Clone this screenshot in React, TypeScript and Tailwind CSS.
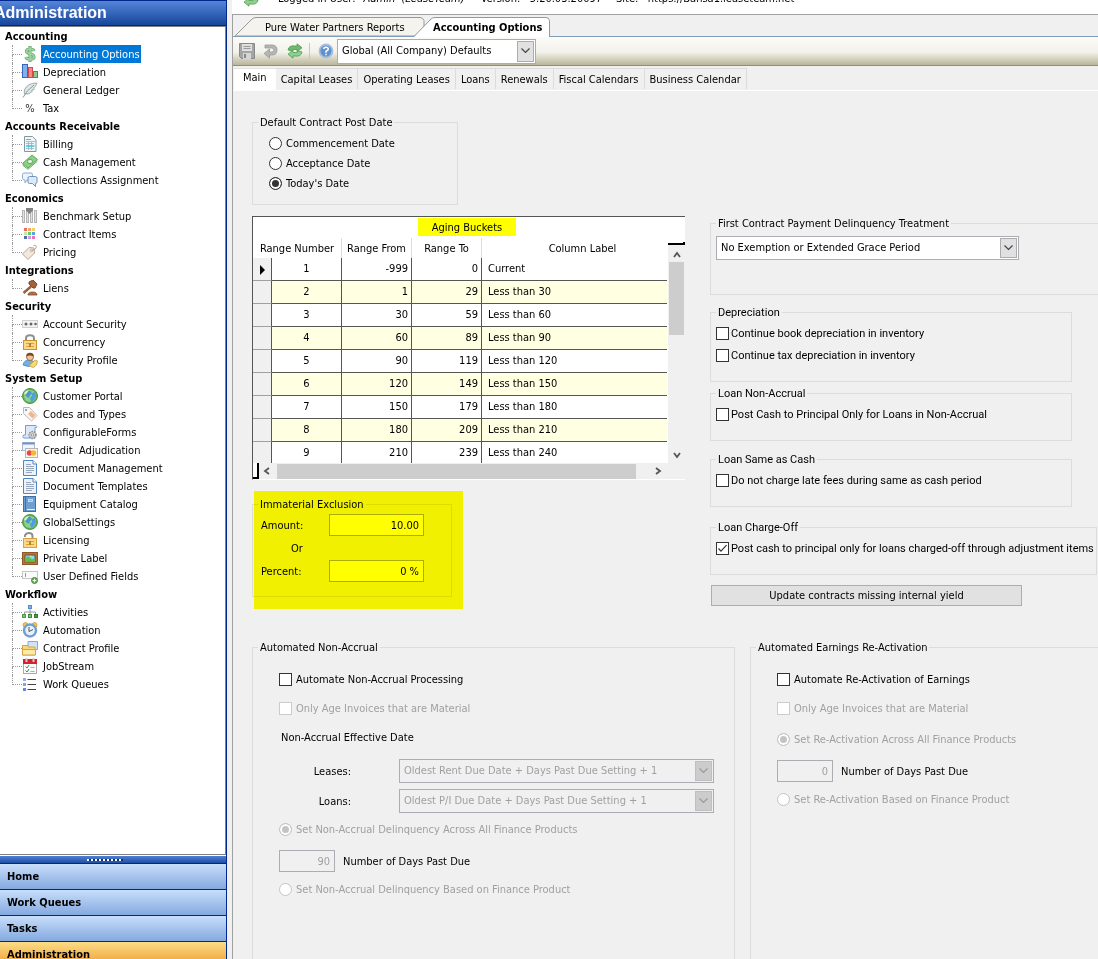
import React, { useState } from 'react';

type IconProps = { name: string };

const GreenGlobe = () => (
  <>
    <circle cx="8" cy="8" r="7.5" fill="#5fae58" stroke="#4f9a4c" />
    <circle cx="8" cy="8" r="6" fill="#8fd389" />
    <path d="M5 3l4 0 1 3-2 1-1 3-2-1-2-2z" fill="#4f96cc" />
    <path d="M10 5l3-1 1 4-2 4-3 2-1-4 2-2z" fill="#4f9fdc" />
    <path d="M2 5q2-3 5-3l-2 3-2 2z" fill="#d3f2cf" />
  </>
);

const Sheet = () => (
  <>
    <path d="M1.500 .5h9.500l3.500 3.500v11.500h-13z" fill="#eaf3fd" stroke="#4f86c6" />
    <path d="M11 .5v3.500h3.500" fill="#fff" stroke="#4f86c6" />
    <path d="M4 4.500h5M4 6.500h8M4 8.500h8M4 10.500h8M4 12.500h6" stroke="#9aa9bd" />
  </>
);

const icons: Record<string, React.ReactNode> = {
  dollar: (
    <>
      <path
        d="M12.200 5Q11.200 3 8 3 4.500 3 4.500 5.200 4.500 7 8 7.700 12 8.500 12 11 12 13.200 8 13.200 4.600 13.200 3.800 11M8 0v16"
        fill="none"
        stroke="#6fae74"
        strokeWidth="3.200"
      />
      <path
        d="M12 5Q11 3 8 3 4.500 3 4.500 5.200 4.500 7 8 7.700 12 8.500 12 11 12 13.200 8 13.200 4.800 13.200 4 11M8 .8v14.400"
        fill="none"
        stroke="#9fd4a0"
        strokeWidth="1.600"
      />
    </>
  ),
  bars: (
    <>
      <rect x=".5" y=".5" width="5" height="13" fill="#7fb0f0" stroke="#3a66b8" />
      <rect x="6.500" y="3.500" width="4" height="10" fill="#f58a8a" stroke="#d84a4a" />
      <rect x="11.500" y="7.500" width="4" height="6" fill="#8fc98f" stroke="#4f8a4f" />
    </>
  ),
  feather: (
    <>
      <path d="M15 1Q5 1 2.500 8q-.5 3 0 4 5 1 8-3l-1-.5 3-1.500-1-.8Q14 4 15 1z" fill="#dfe8e8" stroke="#8a9a9a" strokeWidth=".8" />
      <path d="M1 15.500Q4 9 12 3" fill="none" stroke="#8a9a9a" />
    </>
  ),
  invoice: (
    <>
      <path d="M2.500 .5h8l3.500 3.500v11.500h-11.500z" fill="#f1f7f8" stroke="#7f9a9f" />
      <path d="M4 3.500h5" stroke="#8aa" />
      <path d="M4 5.500h9M4 7.500h8M4 12.500h8M6.500 6v8M9.500 6v8" stroke="#8fb5bd" strokeWidth=".8" />
      <path d="M4 10h8.500" stroke="#3bc0e8" strokeWidth="1.500" />
    </>
  ),
  cash: (
    <>
      <path d="M.5 9.500L10 1l5.500 4.500L6 14z" fill="#8ccf86" stroke="#5fa85c" />
      <path d="M.5 11L6 15.300 15.500 7" fill="none" stroke="#5aa858" />
      <ellipse cx="8" cy="7.500" rx="2.500" ry="2.200" fill="#dff5d8" stroke="#4c9a4a" strokeWidth=".8" />
    </>
  ),
  chat: (
    <>
      <path d="M.5 2.500q0-1.500 1.500-1.500h7q1.500 0 1.500 1.500v4q0 1.500-1.500 1.500H5l-2 3v-3q-2.500 0-2.500-1.500z" fill="#eef4fb" stroke="#8fabd0" />
      <path d="M6 6q0-1.500 1.500-1.500h6q1.500 0 1.500 1.500v4q0 1.500-1.500 1.500v3l-3-3h-3q-1.500 0-1.500-1.500z" fill="#dbe9f9" stroke="#6f93c4" />
    </>
  ),
  benchmark: (
    <>
      <rect x=".5" y="2.500" width="2" height="12" fill="#e3e3e3" stroke="#b5b5b5" />
      <rect x="4.500" y="2.500" width="2" height="12" fill="#e3e3e3" stroke="#b5b5b5" />
      <rect x="8.500" y="2.500" width="2" height="12" fill="#e3e3e3" stroke="#b5b5b5" />
      <rect x="12.500" y="2.500" width="2" height="12" fill="#e3e3e3" stroke="#b5b5b5" />
      <path d="M4 0h7v2.500l-3.500 3.500-3.500-3.500z" fill="#808080" />
    </>
  ),
  palette: (
    <>
      <rect x="2" y="2" width="3" height="3" fill="#f06a6a" />
      <rect x="6" y="2" width="3" height="3" fill="#f5a56a" />
      <rect x="10" y="2" width="3" height="3" fill="#f0d35f" />
      <rect x="2" y="6" width="3" height="3" fill="#c7e8a0" />
      <rect x="6" y="6" width="3" height="3" fill="#5fcf6f" />
      <rect x="10" y="6" width="3" height="3" fill="#4fa5ee" />
      <rect x="2" y="10" width="3" height="3" fill="#4f6fae" />
      <rect x="6" y="10" width="3" height="3" fill="#c99be0" />
      <rect x="10" y="10" width="3" height="3" fill="#f070b8" />
    </>
  ),
  tag: (
    <>
      <path d="M.5 10L7 3.500l5 .5.500 5L6 15.500z" fill="#f3e8dc" stroke="#b8a592" />
      <circle cx="9.500" cy="6.500" r="1.200" fill="#fff" stroke="#b09a86" strokeWidth=".8" />
      <path d="M9.500 6.500Q14 6 14.500 3 14 .5 11.500 1.500" fill="none" stroke="#c4a58c" />
    </>
  ),
  gavel: (
    <>
      <path d="M7 2l4-2 4 4-2 4-2 0-4-4z" fill="#a5623a" stroke="#7d4a2a" />
      <path d="M9 6.500L1.500 13" stroke="#9a5f3a" strokeWidth="2.400" />
      <path d="M6 15q0-3 4.500-3t4.500 3z" fill="#b87044" stroke="#7d4a2a" strokeWidth=".8" />
    </>
  ),
  password: (
    <>
      <rect x=".5" y="4.500" width="15" height="7" fill="#f3f3f3" stroke="#cfcfcf" />
      <circle cx="4" cy="8" r="1.500" fill="#666" />
      <circle cx="9" cy="8" r="1.500" fill="#666" />
      <circle cx="13.500" cy="8" r="1.300" fill="#666" />
    </>
  ),
  lock: (
    <>
      <path d="M4 8V4.500Q4 1.300 8 1.300t4 3.200V8" fill="none" stroke="#8f8f8f" strokeWidth="2" />
      <rect x="1.500" y="6.500" width="13" height="9" fill="#f8d88a" stroke="#c9952f" />
      <path d="M4 9.500h8M4 12.500h8" stroke="#e3a030" />
      <rect x="7" y="9" width="2" height="4" fill="#b8832a" />
    </>
  ),
  unlock: (
    <>
      <path d="M3 5V3.500Q4 1 7 1q3.500 0 3.500 3V7" fill="none" stroke="#8f8f8f" strokeWidth="2" />
      <rect x="1.500" y="6.500" width="13" height="9" fill="#f8d88a" stroke="#dba040" />
      <path d="M4 9.500h8M4 12.500h8" stroke="#e3a030" />
      <rect x="7" y="9" width="2" height="4" fill="#b8832a" />
    </>
  ),
  user: (
    <>
      <path d="M1 13q1-5 6-5 5 0 6 5-6 3-12 0z" fill="#6fb0e8" stroke="#4f86bb" strokeWidth=".8" />
      <circle cx="8" cy="5" r="3.500" fill="#f3c49a" stroke="#8a5a30" strokeWidth=".8" />
      <path d="M4.300 4.500Q4 .8 8 .8t3.700 3.700Q8 2.500 4.300 4.500z" fill="#7a4a22" />
      <path d="M7 14l6-6 2.500 1-1 4-3 2.500z" fill="#f5d878" stroke="#c9a040" strokeWidth=".8" />
    </>
  ),
  globe: <GreenGlobe />,
  codes: (
    <>
      <path d="M1.500 1.500h6l7.500 8-5.500 5.500-8-7.500z" fill="#f7f7f7" stroke="#b9b9b9" />
      <path d="M6 8l3-3 4.500 4.500-3 3z" fill="#f7b583" />
      <circle cx="4" cy="4" r="1" fill="#888" />
    </>
  ),
  script: (
    <>
      <path d="M3.500 1.500h10.500q1.500 1 .5 2h-1.500v10.500H1.500q-1.500-1 0-3h2z" fill="#dbeafb" stroke="#6f9fd4" />
      <circle cx="10.500" cy="11" r="3.500" fill="#d0d0d0" stroke="#8f8f8f" strokeDasharray="1.500 1" strokeWidth="1.500" />
      <circle cx="10.500" cy="11" r="1.200" fill="#fff" stroke="#888" strokeWidth=".8" />
    </>
  ),
  cards: (
    <>
      <rect x=".5" y=".5" width="12" height="8" fill="#f1f5fb" stroke="#a9b8d0" />
      <path d="M.5 1.500h12" stroke="#6f93d0" strokeWidth="2" />
      <rect x="3.500" y="6.500" width="12" height="9" fill="#faf3e8" stroke="#b5b5b5" />
      <circle cx="7.500" cy="11" r="2.700" fill="#e8493a" />
      <circle cx="11.500" cy="11" r="2.700" fill="#f5b833" />
    </>
  ),
  sheet: <Sheet />,
  book: (
    <>
      <rect x="1.500" y=".5" width="12" height="15" fill="#6f9fd0" stroke="#3f6fa5" />
      <path d="M3.500 1v14" stroke="#3f6fa5" />
      <path d="M5 13.500h8" stroke="#e8f0fa" />
      <rect x="6.500" y="3.500" width="4" height="2" fill="#8fb8e0" stroke="#d3e5f7" strokeWidth=".8" />
    </>
  ),
  picture: (
    <>
      <rect x=".5" y="2.500" width="15" height="12" fill="#b5793c" stroke="#8a5a2a" />
      <rect x="3" y="5" width="10" height="7" fill="#6fd0f5" stroke="#4a2a0c" strokeWidth=".6" />
      <path d="M3 12V8l3-1.500 4 3 3-1V12z" fill="#5fbe4c" />
      <path d="M8 6l4 2" stroke="#f5e27a" />
    </>
  ),
  field: (
    <>
      <rect x=".5" y="3.500" width="15" height="7" fill="#fafafa" stroke="#c5c5c5" />
      <path d="M3.500 5v4" stroke="#999" />
      <circle cx="12.500" cy="12.500" r="3" fill="#6fae5c" stroke="#4f8a3c" />
      <path d="M12.500 10.800v3.400M10.800 12.500h3.400" stroke="#fff" />
    </>
  ),
  org: (
    <>
      <rect x="6.500" y="1.500" width="3" height="3" fill="#7fb0f0" stroke="#5f8ad0" />
      <path d="M8 5v3M2.500 11V8h11v3M8 8v3" fill="none" stroke="#999" />
      <rect x=".5" y="10.500" width="3" height="3" fill="#6fc86a" stroke="#4f9a4a" />
      <rect x="6.500" y="10.500" width="3" height="3" fill="#6fc86a" stroke="#3f8a3f" />
      <rect x="12.500" y="10.500" width="3" height="3" fill="#3fa03f" stroke="#2f7a2f" />
    </>
  ),
  clock: (
    <>
      <circle cx="3.500" cy="3" r="2.500" fill="#f5c545" stroke="#c9a040" strokeWidth=".8" />
      <circle cx="12.500" cy="3" r="2.500" fill="#f5c545" stroke="#c9a040" strokeWidth=".8" />
      <circle cx="8" cy="8.500" r="6" fill="#e8f1fb" stroke="#6f9fd0" strokeWidth="2.400" />
      <path d="M7 5v4.500L11 7.500" fill="none" stroke="#555" />
    </>
  ),
  folder: (
    <>
      <path d="M6 1.500h9.500v8H6z" fill="#cfe3fa" stroke="#7fabdc" />
      <path d="M.5 5.500h5l1 1.500H13v8H.5z" fill="#f8d878" stroke="#d0a548" />
      <path d="M.5 15V9.500h13V15z" fill="#fdeaa8" stroke="#d0a548" />
    </>
  ),
  calendar: (
    <>
      <rect x="1.500" y="2.500" width="13" height="13" fill="#fafafa" stroke="#aaa" />
      <rect x="1" y="1" width="14" height="5" fill="#d8202a" />
      <path d="M4.500 0v4M11.500 0v4" stroke="#ccc" strokeWidth="2" />
      <path d="M3.500 8.500l1.500 1.500 2-3M3.500 12.500l1.500 1.500 2-3" fill="none" stroke="#2f9a3c" />
      <path d="M8.500 9.500h4M8.500 13.500h4" stroke="#aaa" />
    </>
  ),
  list: (
    <>
      <rect x="1" y="2" width="3" height="3" fill="#8fb0ee" />
      <rect x="1" y="7" width="3" height="3" fill="#7fa5e8" />
      <rect x="1" y="12" width="3" height="3" fill="#5f8add" />
      <path d="M5.500 3.500H14M5.500 8.500H14M5.500 13.500H14" stroke="#444" />
    </>
  ),
  save: (
    <>
      <path d="M.5 .5h15v15h-13l-2-2z" fill="#a5a5a5" stroke="#8a8a8a" />
      <rect x="3" y="1" width="10" height="7" fill="#e0e0e0" />
      <path d="M4.500 3.500h7M4.500 5.500h7" stroke="#999" />
      <rect x="4" y="10" width="8" height="6" fill="#d5d5d5" />
      <rect x="5" y="11" width="2" height="4" fill="#888" />
    </>
  ),
  undo: (
    <path d="M2 2h7q5 0 5 5t-5 5H6.500v3L1 10.500 6.500 6v3H8.500Q11 9 11 7T8.500 5H2z" fill="#b5b5b5" stroke="#999" strokeWidth=".8" />
  ),
  refresh: (
    <>
      <path d="M1 7Q2 2 8 3h2V.8l5 4-5 4V6.500H8Q5 6 4.500 8z" fill="#6fb86f" stroke="#4f9a54" strokeWidth=".8" />
      <path d="M15 9q-1 5-7 4H6v2.200l-5-4 5-4v2.300h2q3 .5 3.500-1.500z" fill="#8fd08c" stroke="#4f9a54" strokeWidth=".8" />
    </>
  ),
  help: (
    <>
      <circle cx="8" cy="8" r="6.500" fill="#5f93d0" stroke="#a9bfdc" strokeWidth="1.800" />
      <path d="M5.800 6Q5.800 4.200 8 4.200T10.300 6Q10.300 7.300 8 8.200V9.800M8 10.800v1.500" fill="none" stroke="#fff" strokeWidth="1.500" />
    </>
  ),
};

const Icon: React.FC<IconProps> = ({ name }) => (
  <svg viewBox="0 0 16 16" className="size-4 shrink-0" aria-hidden="true">
    {icons[name]}
  </svg>
);

const tree = [
  {
    title: 'Accounting',
    items: [
      { label: 'Accounting Options', icon: 'dollar' },
      { label: 'Depreciation', icon: 'bars' },
      { label: 'General Ledger', icon: 'feather' },
      { label: 'Tax', icon: 'percent' },
    ],
  },
  {
    title: 'Accounts Receivable',
    items: [
      { label: 'Billing', icon: 'invoice' },
      { label: 'Cash Management', icon: 'cash' },
      { label: 'Collections Assignment', icon: 'chat' },
    ],
  },
  {
    title: 'Economics',
    items: [
      { label: 'Benchmark Setup', icon: 'benchmark' },
      { label: 'Contract Items', icon: 'palette' },
      { label: 'Pricing', icon: 'tag' },
    ],
  },
  { title: 'Integrations', items: [{ label: 'Liens', icon: 'gavel' }] },
  {
    title: 'Security',
    items: [
      { label: 'Account Security', icon: 'password' },
      { label: 'Concurrency', icon: 'lock' },
      { label: 'Security Profile', icon: 'user' },
    ],
  },
  {
    title: 'System Setup',
    items: [
      { label: 'Customer Portal', icon: 'globe' },
      { label: 'Codes and Types', icon: 'codes' },
      { label: 'ConfigurableForms', icon: 'script' },
      { label: 'Credit  Adjudication', icon: 'cards' },
      { label: 'Document Management', icon: 'sheet' },
      { label: 'Document Templates', icon: 'sheet' },
      { label: 'Equipment Catalog', icon: 'book' },
      { label: 'GlobalSettings', icon: 'globe' },
      { label: 'Licensing', icon: 'unlock' },
      { label: 'Private Label', icon: 'picture' },
      { label: 'User Defined Fields', icon: 'field' },
    ],
  },
  {
    title: 'Workflow',
    items: [
      { label: 'Activities', icon: 'org' },
      { label: 'Automation', icon: 'clock' },
      { label: 'Contract Profile', icon: 'folder' },
      { label: 'JobStream', icon: 'calendar' },
      { label: 'Work Queues', icon: 'list' },
    ],
  },
];

const buckets = [
  [1, -999, 0, 'Current'],
  [2, 1, 29, 'Less than 30'],
  [3, 30, 59, 'Less than 60'],
  [4, 60, 89, 'Less than 90'],
  [5, 90, 119, 'Less than 120'],
  [6, 120, 149, 'Less than 150'],
  [7, 150, 179, 'Less than 180'],
  [8, 180, 209, 'Less than 210'],
  [9, 210, 239, 'Less than 240'],
];

const Sidebar: React.FC = () => {
  const [selected, setSelected] = useState('Accounting Options');

  return (
    <aside className="flex h-[calc(100vh+8px)] w-[227px] shrink-0 flex-col border-r border-[#00288a]">
      <h1 className="h-[26px] shrink-0 border-y border-[#00288a] bg-linear-to-b from-[#5585d8] to-[#16479c] font-['Liberation_Sans',sans-serif] text-base leading-6 font-bold text-white">
        <span className="-ml-1.5">Administration</span>
      </h1>
      <nav className="flex-1 overflow-hidden border-t border-r border-b border-[#808080] bg-white">
        {tree.map((group) => (
          <section key={group.title}>
            <h2 className="flex h-[18px] items-center pt-0.5 pl-[5px] font-bold">{group.title}</h2>
            <ul>
              {group.items.map((item, i) => (
                <li key={item.label} className="flex h-[18px] items-center pl-3">
                  <span className="flex h-full w-2.5 flex-col">
                    <span className="h-2.5 border-b border-l border-dotted border-[#999]" />
                    {i < group.items.length - 1 && (
                      <span className="flex-1 border-l border-dotted border-[#999]" />
                    )}
                  </span>
                  {item.icon === 'percent' ? (
                    <span className="w-4 pt-0.5 text-center text-[#333]">%</span>
                  ) : (
                    <Icon name={item.icon} />
                  )}
                  <button
                    type="button"
                    onClick={() => setSelected(item.label)}
                    className={`ml-[3px] h-[18px] pt-0.5 pr-px pl-0.5 whitespace-pre ${
                      item.label === selected ? 'bg-[#0078d7] text-white' : ''
                    }`}
                  >
                    {item.label}
                  </button>
                </li>
              ))}
            </ul>
          </section>
        ))}
      </nav>
      <div className="flex h-2 shrink-0 items-center justify-center border-t border-white bg-linear-to-b from-[#4f80d4] to-[#1f50a5] pr-4">
        <span className="h-0.5 w-9 bg-[repeating-linear-gradient(90deg,#fff_0_2px,#12306e_2px_4px)]" />
      </div>
      <div className="shrink-0 font-bold">
        {['Home', 'Work Queues', 'Tasks'].map((label) => (
          <button
            key={label}
            type="button"
            className="block h-[26px] w-full border-t border-[#00288a] bg-linear-to-b from-[#c9defa] to-[#84a9e0] pt-px pl-[7px] text-left"
          >
            {label}
          </button>
        ))}
        <button
          type="button"
          className="block h-[26px] w-full border-t border-[#00288a] bg-linear-to-b from-[#fbdc85] to-[#ec9a20] pt-px pl-[7px] text-left"
        >
          Administration
        </button>
      </div>
    </aside>
  );
};

type GroupProps = { title: string; className?: string; children: React.ReactNode };

const Group: React.FC<GroupProps> = ({ title, className = '', children }) => (
  <fieldset className={`min-w-0 border border-[#dcdcdc] ${className}`}>
    <legend className="ml-[5px] h-4 px-0.5 leading-[18px]">{title}</legend>
    {children}
  </fieldset>
);

type CheckProps = { label: string; checked?: boolean; disabled?: boolean; className?: string };

const Check: React.FC<CheckProps> = ({ label, checked, disabled, className = '' }) => (
  <label className={`flex h-4 items-center whitespace-nowrap ${disabled ? 'text-[#a0a0a0]' : ''} ${className}`}>
    <span className="relative flex">
      <input
        type="checkbox"
        defaultChecked={checked}
        disabled={disabled}
        className="peer size-[13px] appearance-none border border-[#333] bg-white disabled:border-[#ccc]"
      />
      <svg viewBox="0 0 13 13" className="pointer-events-none absolute inset-0 hidden size-[13px] peer-checked:block">
        <path d="M2.500 6.500L5 9.200l5.500-6" fill="none" stroke="#333" strokeWidth="1.200" />
      </svg>
    </span>
    <span className="pt-0.5">{label}</span>
  </label>
);

type RadioProps = CheckProps & { name: string };

const Radio: React.FC<RadioProps> = ({ label, name, checked, disabled, className = '' }) => (
  <label className={`flex h-4 items-center whitespace-nowrap ${disabled ? 'text-[#a0a0a0]' : ''} ${className}`}>
    <input
      type="radio"
      name={name}
      defaultChecked={checked}
      disabled={disabled}
      className="size-[13px] appearance-none rounded-full border border-[#333] bg-white checked:bg-[#333] checked:shadow-[inset_0_0_0_2px_white] disabled:border-[#c4c4c4] checked:disabled:bg-[#c4c4c4]"
    />
    <span className="pt-0.5">{label}</span>
  </label>
);

type ComboProps = { id: string; label?: string; value: string; disabled?: boolean; className?: string };

const Combo: React.FC<ComboProps> = ({ id, label, value, disabled, className = '' }) => (
  <div className={`relative ${className}`}>
    <select
      id={id}
      aria-label={label}
      disabled={disabled}
      className={`h-full w-full appearance-none border border-[#abadb3] pl-1 ${
        disabled ? 'bg-[#f0f0f0] text-[#a0a0a0] opacity-100' : 'bg-white'
      }`}
    >
      <option>{value}</option>
    </select>
    <span
      className={`pointer-events-none absolute inset-y-0.5 right-0.5 flex w-[17px] items-center justify-center border ${
        disabled ? 'border-[#bfbfbf] bg-[#ccc] text-[#999]' : 'border-[#adadad] bg-[#e1e1e1] text-[#444]'
      }`}
    >
      <svg viewBox="0 0 9 6" className="h-1.5 w-[9px]">
        <path d="M.5 .5l4 4 4-4" fill="none" stroke="currentColor" strokeWidth="1.200" />
      </svg>
    </span>
  </div>
);

const Arrow = ({ d }: { d: string }) => (
  <svg viewBox="0 0 8 8" className="size-2">
    <path d={d} fill="none" stroke="#555" strokeWidth="1.800" />
  </svg>
);

const AgingBuckets: React.FC = () => (
  <div className="mt-[11px] h-[264px] overflow-hidden border-t border-b border-l border-t-[#555] border-b-white border-l-[#555] bg-white">
    <div className="flex h-[21px] justify-center pr-1">
      <h3 id="aging" className="mt-px h-[18px] bg-[#ffff00] px-3.5 pt-px leading-[18px]">
        Aging Buckets
      </h3>
    </div>
    <div className="flex h-[225px]">
      <div className="flex-1 overflow-hidden">
        <table aria-labelledby="aging" className="w-full table-fixed border-separate border-spacing-0">
          <colgroup>
            <col className="w-[19px]" />
            <col className="w-[70px]" />
            <col className="w-[70px]" />
            <col className="w-[70px]" />
            <col />
          </colgroup>
          <thead>
            <tr className="h-5">
              <th colSpan={2} className="border-r border-[#dcdcdc] p-0 pt-0.5 font-normal">Range Number</th>
              <th className="border-r border-[#dcdcdc] p-0 pt-0.5 font-normal">Range From</th>
              <th className="border-r border-[#dcdcdc] p-0 pt-0.5 font-normal">Range To</th>
              <th className="p-0 pt-0.5 pl-4 font-normal">Column Label</th>
            </tr>
          </thead>
          <tbody>
            {buckets.map(([num, from, to, label], i) => (
              <tr key={num} className={`h-[23px] align-top ${i % 2 ? 'bg-[#ffffe1]' : 'bg-white'}`}>
                <td className="border-r border-b border-r-[#555] border-b-[#a0a0a0] bg-[#f0f0f0] p-0">
                  {i === 0 && (
                    <svg viewBox="0 0 5 10" className="mt-[7px] ml-[7px] h-2.5 w-[5px]">
                      <path d="M0 0l5 5-5 5z" />
                    </svg>
                  )}
                </td>
                <td className="border-r border-b border-[#555] p-0 pt-[3px] text-center">{num}</td>
                <td className="border-r border-b border-[#555] p-0 pt-[3px] pr-[3px] text-right">{from}</td>
                <td className="border-r border-b border-[#555] p-0 pt-[3px] pr-[3px] text-right">{to}</td>
                <td className="border-b border-[#555] p-0 pt-[3px] pl-1.5">{label}</td>
              </tr>
            ))}
          </tbody>
        </table>
      </div>
      <div className="flex w-[18px] flex-col pl-px">
        <span className="mt-1 h-[3px] border-r-2 border-b-2 border-black" />
        <div className="flex flex-1 flex-col items-center justify-between bg-[#f0f0f0] pt-1.5">
          <Arrow d="M1 6l3-4 3 4" />
          <span className="mt-[3px] mb-auto h-[73px] w-[15px] bg-[#cdcdcd]" />
          <span className="pb-1">
            <Arrow d="M1 2l3 4 3-4" />
          </span>
        </div>
      </div>
    </div>
    <div className="flex h-4">
      <span className="w-1.5 border-r-2 border-b-2 border-black" />
      <div className="flex flex-1 items-center bg-[#f0f0f0] pl-1">
        <Arrow d="M6 1L2 4l4 3" />
        <span className="ml-1.5 h-[15px] w-[359px] bg-[#cdcdcd]" />
        <span className="ml-[18px]">
          <Arrow d="M2 1l4 3-4 3" />
        </span>
      </div>
    </div>
  </div>
);

const TopTabs: React.FC = () => (
  <div className="relative flex h-[22px] items-end border-b border-[#7f9db9] pl-px">
    <div className="relative -mb-px flex h-5 w-[197px] items-center pt-0.5 pl-[31px]">
      <svg viewBox="0 0 197 20" className="absolute inset-0 h-5 w-[197px]">
        <path d="M1 19L17 3q2-2.500 5-2.500h164q3 0 4 3L190 19z" fill="#f4f3ee" stroke="#9a9a92" />
        <path d="M0 19.500h197" stroke="#7f9db9" />
      </svg>
      <button type="button" className="relative whitespace-nowrap">Pure Water Partners Reports</button>
    </div>
    <div className="relative -mb-px -ml-[17px] flex h-5 w-[136px] items-center pt-0.5 pl-[19px] font-bold">
      <svg viewBox="0 0 136 20" className="absolute inset-0 h-5 w-[136px]">
        <path d="M0 20L16 3q2-2.500 5-2.500h111q3 0 3.500 3V20z" fill="#fff" />
        <path d="M0 19.500L16 3q2-2.500 5-2.500h111q3 0 3.500 3V20" fill="none" stroke="#7f9db9" />
      </svg>
      <button type="button" className="relative whitespace-nowrap">Accounting Options</button>
    </div>
  </div>
);

const App: React.FC = () => {
  const pages = ['Capital Leases', 'Operating Leases', 'Loans', 'Renewals', 'Fiscal Calendars', 'Business Calendar'];

  return (
    <div className="flex h-screen overflow-hidden bg-[#f0f0f0] font-['DejaVu_Sans_Condensed','Noto_Sans',sans-serif] text-[11px] leading-4 text-black">
      <Sidebar />
      <main className="ml-[5px] flex min-w-0 flex-1 flex-col">
        {/* Session line */}
        <div className="flex h-3.5 shrink-0 items-end overflow-hidden bg-white">
          <p className="mb-[7px] flex pl-[11px] whitespace-pre">
            <Icon name="refresh" />
            <span className="ml-[19px]">Logged In User:</span>
            <i className="ml-2">Admin  (LeaseTeam)</i>
            <span className="ml-4">Version:   5.20.03.20097</span>
            <span className="ml-3.5">Site:   https://Bansa1.leaseteam.net</span>
          </p>
        </div>

        <div className="flex min-h-0 flex-1 flex-col border-t border-l border-[#a0a0a0]">
          <TopTabs />

          {/* Toolbar */}
          <div className="flex h-[29px] shrink-0 items-center border-b border-[#918f78] bg-linear-to-b from-[#fcfbf7] via-[#f2f1ea] via-55% to-[#b9b698] pl-1.5">
            <Icon name="save" />
            <span className="w-2" />
            <Icon name="undo" />
            <span className="w-2" />
            <Icon name="refresh" />
            <span className="mr-2 ml-1.5 h-4 w-px bg-[#c9c7b5]" />
            <Icon name="help" />
            <Combo
              id="company"
              label="Company"
              value="Global (All Company) Defaults"
              className="ml-[3px] h-[25px] w-[199px]"
            />
          </div>

          {/* Option pages */}
          <div className="flex shrink-0 items-start border-b border-white pt-0.5 pl-px">
            <button type="button" className="h-[22px] border-t border-[#e3e3e3] bg-white px-[9px] pb-1">Main</button>
            {pages.map((page) => (
              <button
                key={page}
                type="button"
                className="h-[21px] border-t border-r border-[#dcdcdc] px-[5px] pt-0.5 whitespace-nowrap"
              >
                {page}
              </button>
            ))}
          </div>

          <div className="flex min-h-0 flex-1 flex-col pt-[23px] pl-[19px]">
            <div className="flex h-[525px] shrink-0 gap-[25px]">
              <div className="w-[433px] shrink-0">
                <Group title="Default Contract Post Date" className="h-[91px] w-[206px]">
                  <div className="flex flex-col gap-1 pt-[5px] pl-4">
                    <Radio name="post" label="Commencement Date" className="gap-1" />
                    <Radio name="post" label="Acceptance Date" className="gap-1" />
                    <Radio name="post" label="Today's Date" checked className="gap-1" />
                  </div>
                </Group>

                <AgingBuckets />

                <div className="relative mt-4">
                  <Group title="Immaterial Exclusion" className="h-[101px] w-[200px]">
                    <div className="flex flex-col pl-2">
                      <div className="mt-0.5 flex items-center">
                        <label htmlFor="amount" className="w-[68px] pt-0.5">Amount:</label>
                        <input id="amount" defaultValue="10.00" className="h-[22px] w-[95px] border border-[#abadb3] bg-white px-1 text-right" />
                      </div>
                      <span className="mt-[5px] mb-[3px] pl-[30px]">Or</span>
                      <div className="flex items-center">
                        <label htmlFor="percent" className="w-[68px] pt-0.5">Percent:</label>
                        <input id="percent" defaultValue="0 %" className="h-[22px] w-[95px] border border-[#abadb3] bg-white px-1 text-right" />
                      </div>
                    </div>
                  </Group>
                  {/* Highlighter */}
                  <div className="pointer-events-none absolute -top-[5px] left-0.5 h-[118px] w-[209px] bg-[#ffff00] mix-blend-multiply" />
                </div>
              </div>

              <div className="flex min-w-0 flex-1 flex-col pt-[101px]">
                <Group title="First Contract Payment Delinquency Treatment" className="h-20 border-r-0">
                  <Combo
                    id="delinquency"
                    label="First Contract Payment Delinquency Treatment"
                    value="No Exemption or Extended Grace Period"
                    className="mt-[5px] ml-[5px] h-6 w-[303px]"
                  />
                </Group>
                <div className="font-[Roboto,sans-serif]">
                  <Group title="Depreciation" className="mt-[9px] mr-[26px] h-[78px]">
                    <div className="flex flex-col gap-1.5 pt-[5px] pl-[5px]">
                      <Check label="Continue book depreciation in inventory" className="gap-0.5" />
                      <Check label="Continue tax depreciation in inventory" className="gap-0.5" />
                    </div>
                  </Group>
                  <Group title="Loan Non-Accrual" className="mt-[3px] mr-[26px] h-14">
                    <Check label="Post Cash to Principal Only for Loans in Non-Accrual" className="mt-[5px] ml-[5px] gap-0.5" />
                  </Group>
                  <Group title="Loan Same as Cash" className="mt-2.5 mr-[26px] h-14">
                    <Check label="Do not charge late fees during same as cash period" className="mt-[5px] ml-[5px] gap-0.5" />
                  </Group>
                  <Group title="Loan Charge-Off" className="mt-3 mr-px h-14">
                    <Check
                      label="Post cash to principal only for loans charged-off through adjustment items"
                      checked
                      className="mt-[5px] ml-[5px] gap-0.5"
                    />
                  </Group>
                </div>
                <button type="button" className="mt-2.5 ml-px h-[21px] w-[311px] border border-[#adadad] bg-[#e1e1e1]">
                  Update contracts missing internal yield
                </button>
              </div>
            </div>

            <div className="flex min-h-0 flex-1 gap-[15px]">
              <Group title="Automated Non-Accrual" className="w-[483px] shrink-0 border-b-0">
                <div className="flex flex-col pt-4 pl-[26px]">
                  <Check label="Automate Non-Accrual Processing" className="gap-1" />
                  <Check label="Only Age Invoices that are Material" disabled className="mt-[13px] gap-1" />
                  <span className="mt-3.5 ml-0.5">Non-Accrual Effective Date</span>
                  <div className="mt-[13px] flex h-6 items-center">
                    <label htmlFor="leases" className="mr-12 w-[72px] pt-0.5 text-right">Leases:</label>
                    <Combo id="leases" value="Oldest Rent Due Date + Days Past Due Setting + 1" disabled className="h-6 w-[315px]" />
                  </div>
                  <div className="mt-1.5 flex h-6 items-center">
                    <label htmlFor="loans" className="mr-12 w-[72px] pt-0.5 text-right">Loans:</label>
                    <Combo id="loans" value="Oldest P/I Due Date + Days Past Due Setting + 1" disabled className="h-6 w-[315px]" />
                  </div>
                  <Radio name="accrual" label="Set Non-Accrual Delinquency Across All Finance Products" checked disabled className="mt-2 gap-1" />
                  <label className="mt-[13px] flex items-center gap-2">
                    <input defaultValue="90" disabled className="h-[22px] w-14 border border-[#abadb3] px-1 text-right text-[#a0a0a0]" />
                    <span className="pt-0.5">Number of Days Past Due</span>
                  </label>
                  <Radio name="accrual" label="Set Non-Accrual Delinquency Based on Finance Product" disabled className="mt-[9px] gap-1" />
                </div>
              </Group>
              <Group title="Automated Earnings Re-Activation" className="flex-1 border-r-0 border-b-0">
                <div className="flex flex-col pt-4 pl-[26px]">
                  <Check label="Automate Re-Activation of Earnings" className="gap-1" />
                  <Check label="Only Age Invoices that are Material" disabled className="mt-[13px] gap-1" />
                  <Radio name="react" label="Set Re-Activation Across All Finance Products" checked disabled className="mt-[15px] gap-1" />
                  <label className="mt-[13px] flex items-center gap-2">
                    <input defaultValue="0" disabled className="h-[22px] w-14 border border-[#abadb3] px-1 text-right text-[#a0a0a0]" />
                    <span className="pt-0.5">Number of Days Past Due</span>
                  </label>
                  <Radio name="react" label="Set Re-Activation Based on Finance Product" disabled className="mt-[9px] gap-1" />
                </div>
              </Group>
            </div>
          </div>
        </div>
      </main>
    </div>
  );
};

export default App;
